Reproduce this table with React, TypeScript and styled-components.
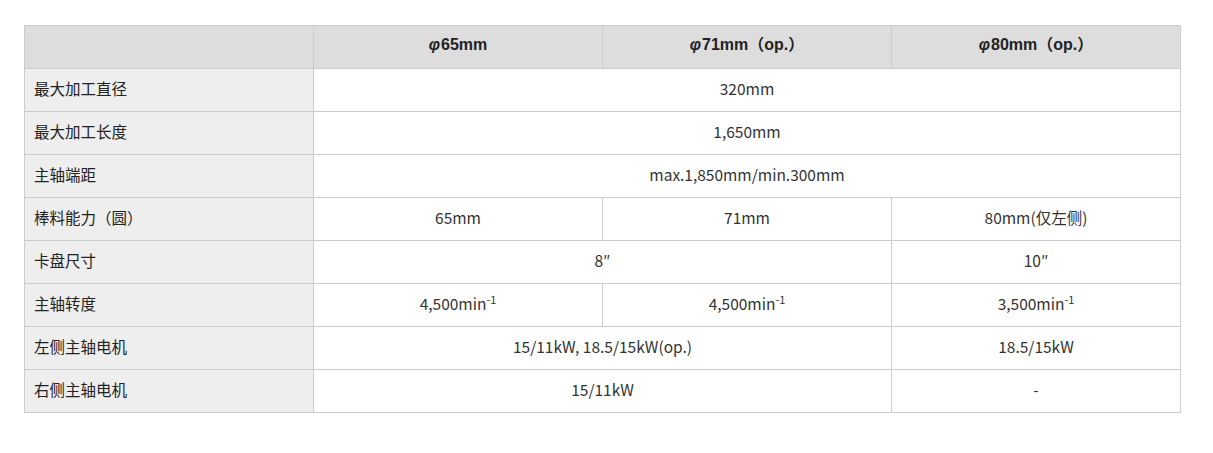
import React from "react";
import styled, { createGlobalStyle } from "styled-components";

const Global = createGlobalStyle`
  html, body { margin: 0; padding: 0; background: #fff; }
  body { font-family: "Noto Sans CJK SC", "Noto Sans", sans-serif; color: #333; }
`;

const Page = styled.div`
  padding: 25px 32px 0 24px;
`;

const Table = styled.table`
  width: 1157px;
  border-collapse: collapse;
  table-layout: fixed;
  font-size: 15.5px;
`;

const HeadCell = styled.th`
  background: #dddddd;
  border: 1px solid #cccccc;
  height: 38px;
  padding: 0 10px 4px;
  font-family: "Liberation Sans", "Noto Sans CJK SC", sans-serif;
  font-weight: bold;
  font-size: 16px;
  line-height: 20px;
  color: #222;
  text-align: center;
`;

const LabelCell = styled.td`
  background: #eeeeee;
  border: 1px solid #cccccc;
  height: 37px;
  padding: 0 9px 5px;
  line-height: 20px;
  text-align: left;
  color: #222;
`;

const Cell = styled.td`
  background: #fff;
  border: 1px solid #cccccc;
  height: 37px;
  padding: 0 10px 5px;
  line-height: 20px;
  text-align: center;
  color: #333;
`;

const Sup = styled.sup`
  font-size: 11px;
  vertical-align: 6px;
  line-height: 0;
`;

const Phi = styled.span`
  font-style: italic;
  margin-right: 1px;
`;

type Row = { label: string; cells: { v: React.ReactNode; span?: number }[] };

const rpm = (n: string) => (
  <>
    {n}min<Sup>-1</Sup>
  </>
);

const rows: Row[] = [
  { label: "最大加工直径", cells: [{ v: "320mm", span: 3 }] },
  { label: "最大加工长度", cells: [{ v: "1,650mm", span: 3 }] },
  { label: "主轴端距", cells: [{ v: "max.1,850mm/min.300mm", span: 3 }] },
  { label: "棒料能力（圆）", cells: [{ v: "65mm" }, { v: "71mm" }, { v: "80mm(仅左侧)" }] },
  { label: "卡盘尺寸", cells: [{ v: "8″", span: 2 }, { v: "10″" }] },
  { label: "主轴转度", cells: [{ v: rpm("4,500") }, { v: rpm("4,500") }, { v: rpm("3,500") }] },
  { label: "左侧主轴电机", cells: [{ v: "15/11kW, 18.5/15kW(op.)", span: 2 }, { v: "18.5/15kW" }] },
  { label: "右侧主轴电机", cells: [{ v: "15/11kW", span: 2 }, { v: "-" }] },
];

export default function App() {
  return (
    <Page>
      <Global />
      <Table>
        <thead>
          <tr>
            <HeadCell />
            <HeadCell><Phi>φ</Phi>65mm</HeadCell>
            <HeadCell><Phi>φ</Phi>71mm（op.）</HeadCell>
            <HeadCell><Phi>φ</Phi>80mm（op.）</HeadCell>
          </tr>
        </thead>
        <tbody>
          {rows.map((r) => (
            <tr key={r.label}>
              <LabelCell>{r.label}</LabelCell>
              {r.cells.map((c, i) => (
                <Cell key={i} colSpan={c.span ?? 1}>{c.v}</Cell>
              ))}
            </tr>
          ))}
        </tbody>
      </Table>
    </Page>
  );
}
